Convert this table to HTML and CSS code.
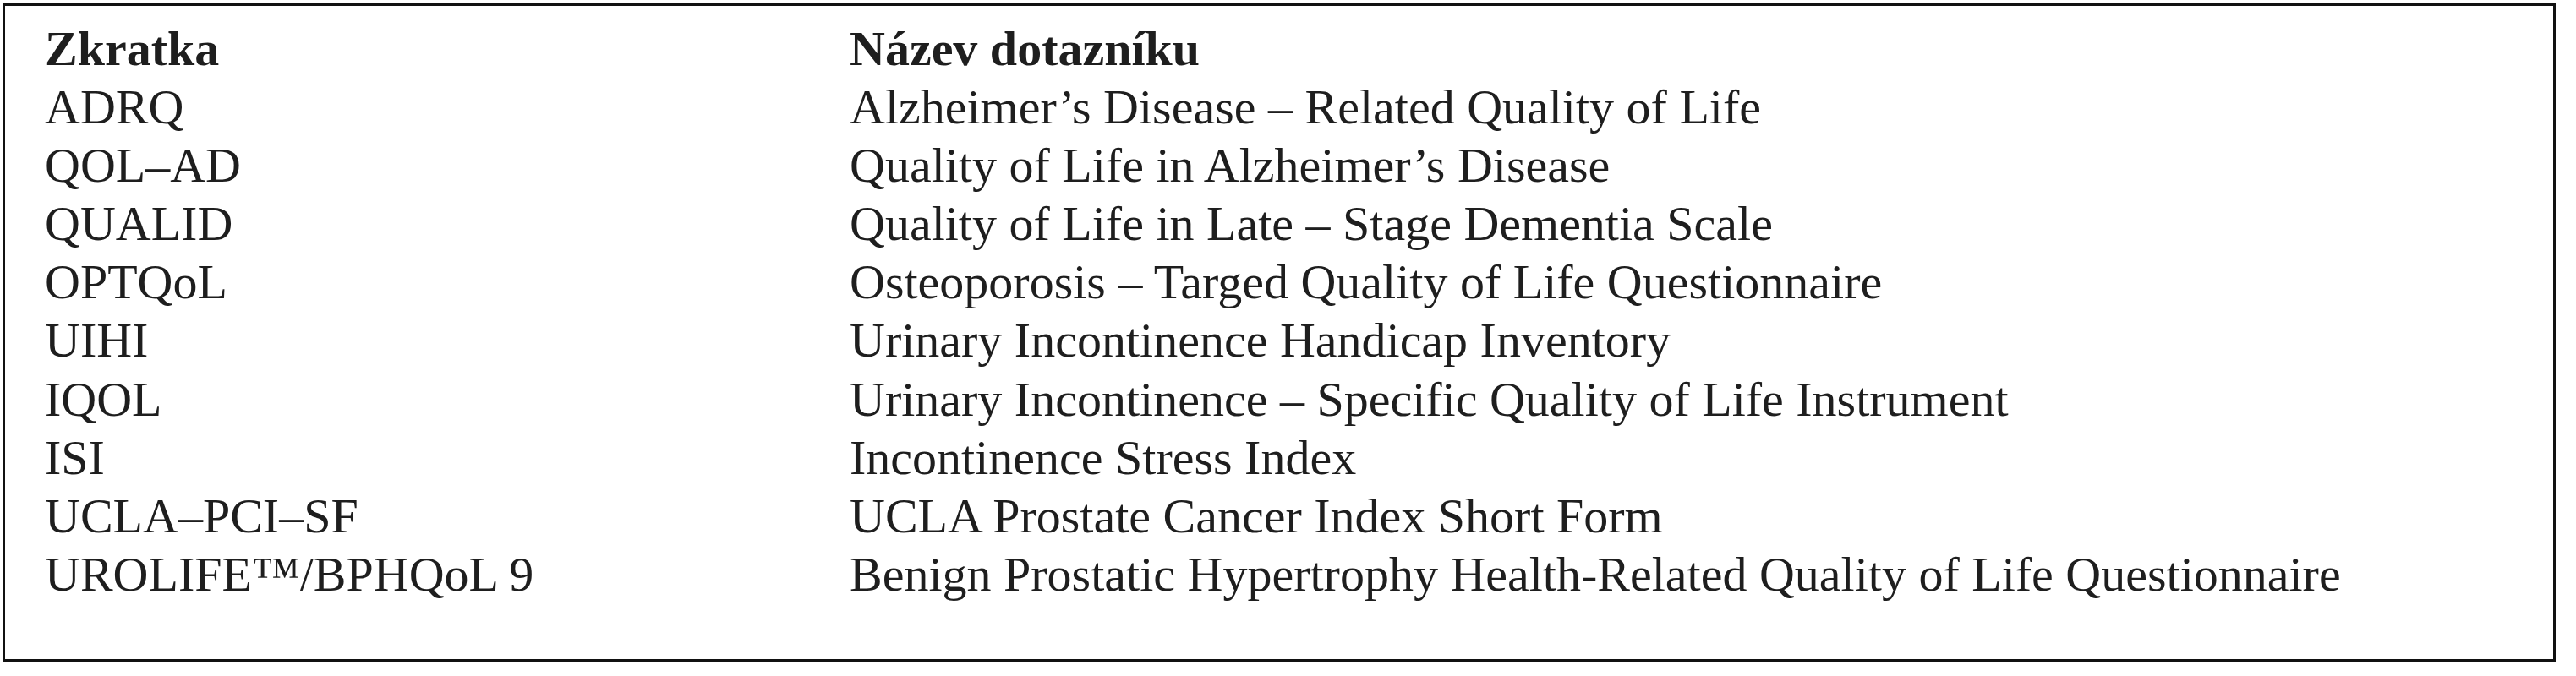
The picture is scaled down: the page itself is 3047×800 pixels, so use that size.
FILE: index.html
```html
<!DOCTYPE html>
<html lang="cs">
<head>
<meta charset="utf-8">
<title>Zkratky dotazníků</title>
<link rel="stylesheet" href="styles.css">
</head>
<body>
<div class="box">
  <table class="list">
    <thead>
      <tr><th class="abbr">Zkratka</th><th class="name">Název dotazníku</th></tr>
    </thead>
    <tbody>
      <tr><td class="abbr">ADRQ</td><td class="name">Alzheimer’s Disease – Related Quality of Life</td></tr>
      <tr><td class="abbr">QOL–AD</td><td class="name">Quality of Life in Alzheimer’s Disease</td></tr>
      <tr><td class="abbr">QUALID</td><td class="name">Quality of Life in Late – Stage Dementia Scale</td></tr>
      <tr><td class="abbr">OPTQoL</td><td class="name">Osteoporosis – Targed Quality of Life Questionnaire</td></tr>
      <tr><td class="abbr">UIHI</td><td class="name">Urinary Incontinence Handicap Inventory</td></tr>
      <tr><td class="abbr">IQOL</td><td class="name">Urinary Incontinence – Specific Quality of Life Instrument</td></tr>
      <tr><td class="abbr">ISI</td><td class="name">Incontinence Stress Index</td></tr>
      <tr><td class="abbr">UCLA–PCI–SF</td><td class="name">UCLA Prostate Cancer Index Short Form</td></tr>
      <tr><td class="abbr">UROLIFE™/BPHQoL 9</td><td class="name">Benign Prostatic Hypertrophy Health-Related Quality of Life Questionnaire</td></tr>
    </tbody>
  </table>
</div>
</body>
</html>
```

FILE: styles.css
```css
html, body {
  margin: 0;
  padding: 0;
  background: #ffffff;
}

body {
  padding: 4px 0 0 3px;
}

.box {
  box-sizing: border-box;
  width: 3020px;
  height: 779px;
  border: 3px solid #111111;
  padding: 16px 0 0 47px;
  font-family: "Liberation Serif", "Times New Roman", serif;
  font-size: 58px;
  line-height: 69.1px;
  color: #1e1e1e;
}

.list {
  border-collapse: collapse;
  border-spacing: 0;
}

.list th,
.list td {
  padding: 0;
  text-align: left;
  vertical-align: baseline;
  white-space: nowrap;
}

.list th {
  font-weight: bold;
}

.abbr {
  width: 952px;
}
```
